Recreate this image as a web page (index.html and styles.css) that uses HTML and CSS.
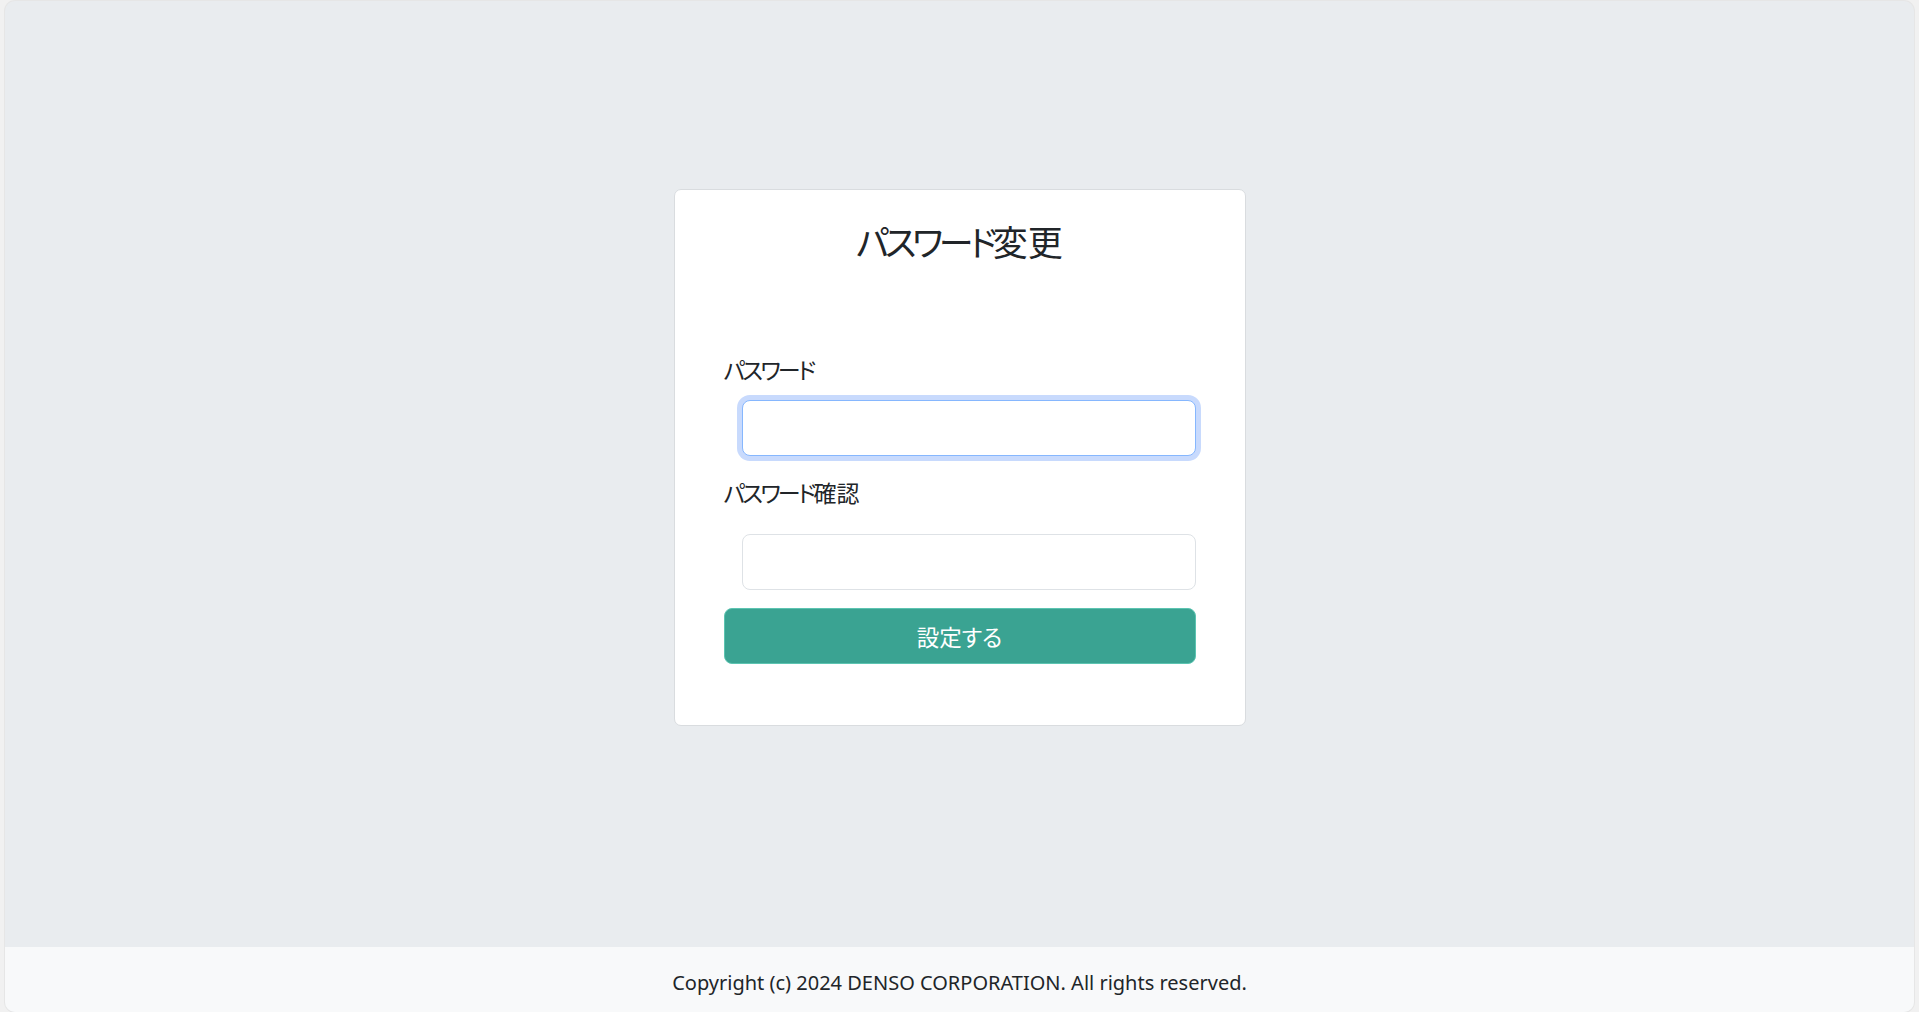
FILE: index.html
```html
<!DOCTYPE html>
<html lang="ja">
<head>
<meta charset="utf-8">
<title>パスワード変更</title>
<link rel="stylesheet" href="styles.css">
</head>
<body>
<div class="frame">
  <main class="main">
    <section class="card">
      <h3 class="card-title"><span class="kana">パスワード</span>変更</h3>
      <form class="form">
        <label class="label label-first" for="pw"><span class="kana">パスワード</span></label>
        <input class="input input-focus" id="pw" type="password">
        <label class="label label-second" for="pw2"><span class="kana">パスワード</span>確認</label>
        <input class="input input-second" id="pw2" type="password">
        <button class="btn" type="button">設定する</button>
      </form>
    </section>
  </main>
  <footer class="footer">Copyright (c) 2024 DENSO CORPORATION. All rights reserved.</footer>
</div>
</body>
</html>
```
FILE: styles.css
```css
html, body {
  margin: 0;
  padding: 0;
  height: 100%;
}
body {
  background: #f1f1f1;
  padding: 1px 5px 0 5px;
  box-sizing: border-box;
  font-family: "Noto Sans CJK JP", "Noto Sans", sans-serif;
  color: #212529;
  font-feature-settings: "palt";
}
.frame {
  height: 100%;
  border-radius: 10px;
  overflow: hidden;
  display: flex;
  flex-direction: column;
  background: #e9ecef;
  box-shadow: 0 0 0 1px #e6e6e6;
}
.main {
  flex: 1;
  display: flex;
  justify-content: center;
  align-items: flex-start;
  padding-top: 188px;
}
.card {
  width: 572px;
  box-sizing: border-box;
  background: #fff;
  border: 1px solid #d9dcdf;
  border-radius: 7px;
  padding: 30px 49px 61px 49px;
}
.card-title {
  margin: 0;
  font-size: 35px;
  font-weight: 400;
  line-height: 42px;
  text-align: center;
}
.kana {
  letter-spacing: -0.12em;
}
.form {
  display: flex;
  flex-direction: column;
  margin-top: 91px;
}
.label {
  font-size: 23px;
  line-height: 33px;
}
.input {
  margin: 14px 0 0 18px;
  height: 56px;
  box-sizing: border-box;
  border: 1px solid #dee2e6;
  border-radius: 8px;
  background: #fff;
  outline: none;
  font-size: 20px;
  padding: 0 15px;
}
.input-focus {
  border-color: #86b7fe;
  box-shadow: 0 0 0 5px #c8dafd;
}
.label-second {
  margin-top: 20px;
}
.input-second {
  margin-top: 25px;
}
.btn {
  margin-top: 18px;
  height: 56px;
  border: 1px solid #5cc4b1;
  border-radius: 8px;
  background: #3aa392;
  color: #fff;
  font-family: "Noto Sans CJK JP", sans-serif;
  font-feature-settings: "palt";
  font-size: 22.5px;
  cursor: pointer;
}
.footer {
  height: 65px;
  flex: none;
  background: #f8f9fa;
  display: flex;
  align-items: center;
  justify-content: center;
  font-family: "Noto Sans", "Open Sans", sans-serif;
  font-size: 20px;
  padding-top: 6px;
  box-sizing: border-box;
}
```
